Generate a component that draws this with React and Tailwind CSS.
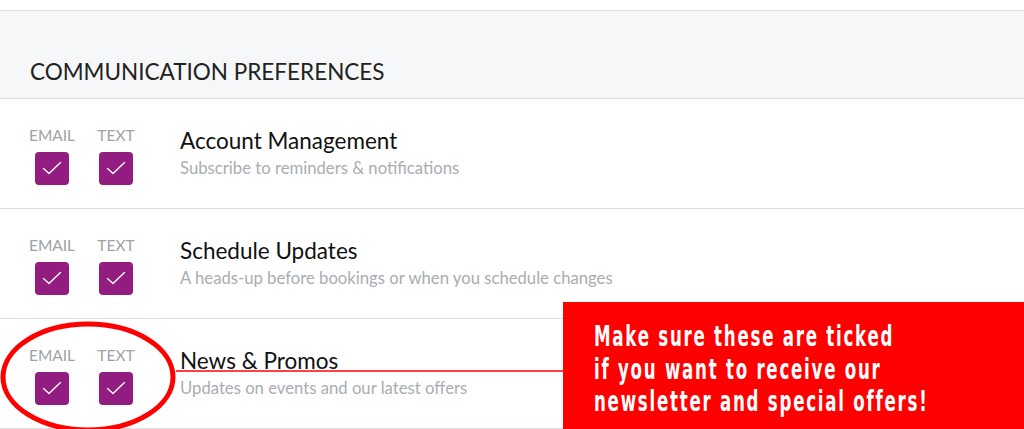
import React from "react";

function Check() {
  return (
    <div className="w-[34px] h-[33px] rounded-[4px] bg-[#931c81] flex items-center justify-center">
      <svg width="34" height="33" viewBox="0 0 34 33">
        <path d="M8.5 16.5 L14 21.5 L25.5 10.5" fill="none" stroke="#ffffff" strokeWidth="1.4" strokeLinecap="round" strokeLinejoin="round" />
      </svg>
    </div>
  );
}

function Row({ title, sub }) {
  return (
    <div className="h-[110px] border-b border-[#dcdfe4] flex pl-[29px] pt-[27px]">
      <div className="flex gap-[18px]">
        <div className="w-[46px] flex flex-col items-center">
          <div className="text-[15.5px] leading-[18px] text-[#9ea2a7]">EMAIL</div>
          <div className="mt-[8px]"><Check /></div>
        </div>
        <div className="w-[46px] flex flex-col items-center">
          <div className="text-[15.5px] leading-[18px] text-[#9ea2a7]">TEXT</div>
          <div className="mt-[8px]"><Check /></div>
        </div>
      </div>
      <div className="ml-[41px] pt-[1px]">
        <div className="text-[22.5px] leading-[27px] text-[#111111]">{title}</div>
        <div className="mt-[4px] text-[16.7px] leading-[20px] text-[#a9adb2]">{sub}</div>
      </div>
    </div>
  );
}

export default function App() {
  return (
    <div className="relative w-[1024px] h-[429px] overflow-hidden bg-white" style={{ fontFamily: "Lato, 'Open Sans', sans-serif" }}>
      <div className="h-[10px]" />
      <div className="h-[89px] bg-[#f6f7f9] border-y border-[#dcdfe4] px-[30px] pt-[47px]">
        <div className="text-[22.5px] leading-[27px] text-[#222222]">COMMUNICATION PREFERENCES</div>
      </div>
      <Row title="Account Management" sub="Subscribe to reminders & notifications" />
      <Row title="Schedule Updates" sub="A heads-up before bookings or when you schedule changes" />
      <Row title="News & Promos" sub="Updates on events and our latest offers" />

      <svg className="absolute left-0 top-[300px]" width="600" height="129" viewBox="0 300 600 129">
        <ellipse cx="88" cy="377" rx="85" ry="53" fill="none" stroke="#ff0000" strokeWidth="5" />
        <line x1="176" y1="371" x2="564" y2="371" stroke="#ff0000" strokeWidth="1.5" />
      </svg>

      <div className="absolute left-[563px] top-[302px] w-[461px] h-[127px] bg-[#ff0000] pl-[31px] pt-[18px]">
        <div
          className="text-white font-bold text-[29px] leading-[32.5px] tracking-[2.7px] whitespace-pre origin-left scale-x-[0.64]"
          style={{ fontFamily: "'DejaVu Sans Condensed', 'DejaVu Sans', sans-serif" }}
        >
          {"Make sure these are ticked\nif you want to receive our\nnewsletter and special offers!"}
        </div>
      </div>
    </div>
  );
}
